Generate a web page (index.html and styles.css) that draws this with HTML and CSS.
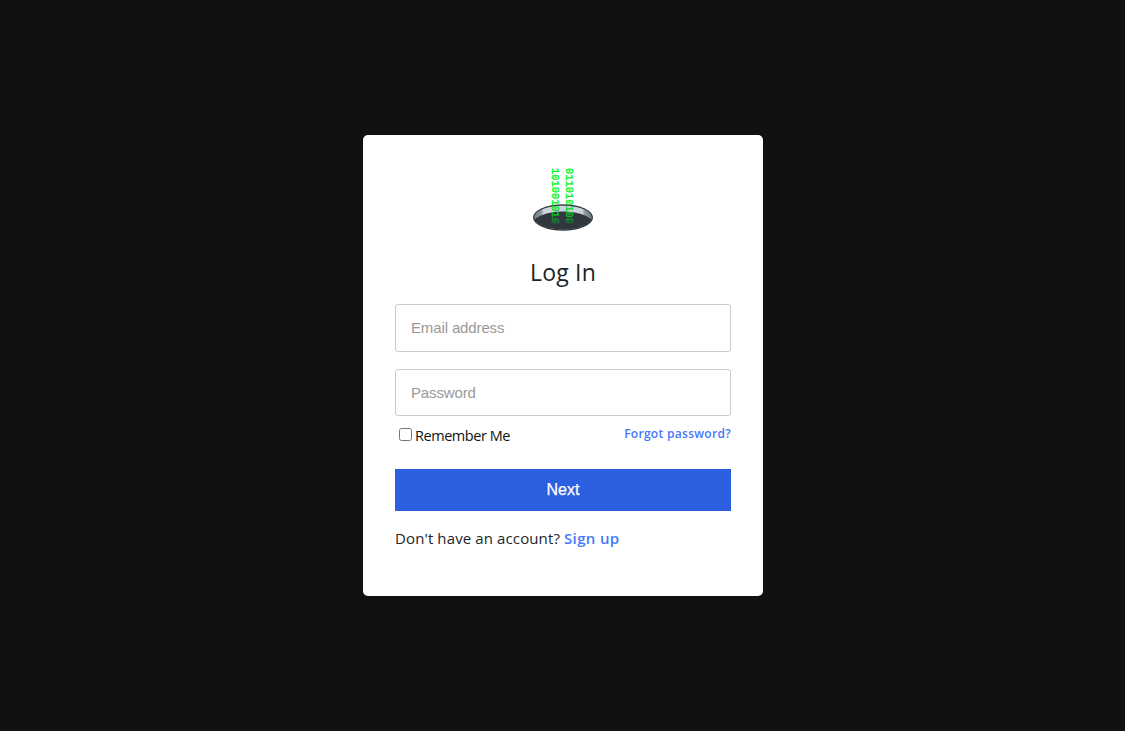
FILE: index.html
```html
<!DOCTYPE html>
<html lang="en">
<head>
<meta charset="utf-8">
<title>Log In</title>
<link rel="stylesheet" href="styles.css">
</head>
<body>
<main class="card">
  <svg class="logo" width="64" height="64" viewBox="0 0 64 64" aria-hidden="true">
    <defs>
      <linearGradient id="rim" x1="0" x2="1" y1="0" y2="0"><stop offset="0" stop-color="#75838b"/><stop offset=".12" stop-color="#87949c"/><stop offset=".17" stop-color="#cbd5dc"/><stop offset=".83" stop-color="#cbd5dc"/><stop offset=".88" stop-color="#87949c"/><stop offset="1" stop-color="#75838b"/></linearGradient>
      <linearGradient id="fade" x1="0" x2="61" y1="0" y2="0" gradientUnits="userSpaceOnUse"><stop offset=".62" stop-color="#00f519"/><stop offset=".8" stop-color="#00c91b"/><stop offset="1" stop-color="#00c91b" stop-opacity=".05"/></linearGradient>
      <clipPath id="hole"><ellipse cx="32" cy="50.5" rx="28.8" ry="12"/></clipPath>
    </defs>
    <ellipse cx="32" cy="50.5" rx="30" ry="13.2" fill="#30383e"/>
    <g clip-path="url(#hole)">
      <ellipse cx="32" cy="50.5" rx="29" ry="12.2" fill="url(#rim)"/>
      <ellipse cx="32" cy="58" rx="31" ry="13.5" fill="#30383e"/>
    </g>
    <g class="bits" fill="url(#fade)" stroke="url(#fade)">
      <text transform="translate(20.8 1) rotate(90) scale(.945 1)">101001010</text>
      <text transform="translate(35.1 1) rotate(90) scale(.945 1)">011010100</text>
    </g>
  </svg>
  <h1 class="title">Log In</h1>
  <form class="form">
    <input class="field" type="email" placeholder="Email address">
    <input class="field field-password" type="password" placeholder="Password">
    <div class="options">
      <label class="remember"><input class="check" type="checkbox"><span>Remember Me</span></label>
      <a class="link forgot">Forgot password?</a>
    </div>
    <button class="next" type="button">Next</button>
  </form>
  <p class="signup"><span class="question">Don't have an account?</span><a class="link">Sign up</a></p>
</main>
</body>
</html>
```
FILE: styles.css
```css
* { box-sizing: border-box; }
body {
  margin: 0;
  height: 100vh;
  display: flex;
  align-items: center;
  justify-content: center;
  background: #111;
  color: #212529;
  font-family: "Open Sans", "Noto Sans", sans-serif;
}
.card {
  width: 400px;
  height: 461px;
  margin-left: 1px;
  padding: 32px;
  background: #fff;
  border-radius: 5px;
  display: flex;
  flex-direction: column;
}
.logo { display: block; margin: 0 auto; flex: none; }
.bits { font: 11px "Liberation Mono", monospace; stroke-width: .35; }
.title {
  margin: 24px 0 15px;
  height: 34px;
  font-size: 23px;
  line-height: 34px;
  font-weight: 400;
  letter-spacing: .2px;
  text-align: center;
}
.form { display: flex; flex-direction: column; }
.field {
  height: 48px;
  padding: 0 15px 1px;
  border: 1px solid #ccc;
  border-radius: 3px;
  font: 15px "Liberation Sans", Arial, sans-serif;
  letter-spacing: -.13px;
}
.field::placeholder { color: #999; }
.field-password { height: 47px; margin-top: 17px; padding-bottom: 0; }
.options {
  height: 53px;
  padding-top: 9px;
  display: flex;
  justify-content: space-between;
  align-items: flex-start;
}
.remember {
  display: flex;
  align-items: center;
  height: 20px;
  font-size: 14.5px;
  letter-spacing: -.45px;
  color: #111;
}
.check { width: 13px; height: 13px; margin: 0 3px 1px 4px; }
.link { color: #4678f8; font-weight: 600; }
.forgot { font-size: 12px; line-height: 18px; letter-spacing: .3px; }
.next {
  height: 42px;
  border: 0;
  background: #2c60e0;
  color: #fff;
  font: 16px "Liberation Sans", Arial, sans-serif;
  -webkit-text-stroke: .25px #fff;
}
.signup {
  margin: 15px 0 0;
  display: flex;
  gap: 4px;
  font-size: 15px;
  line-height: 24px;
  letter-spacing: .12px;
}
.signup .link { letter-spacing: .35px; }
```
